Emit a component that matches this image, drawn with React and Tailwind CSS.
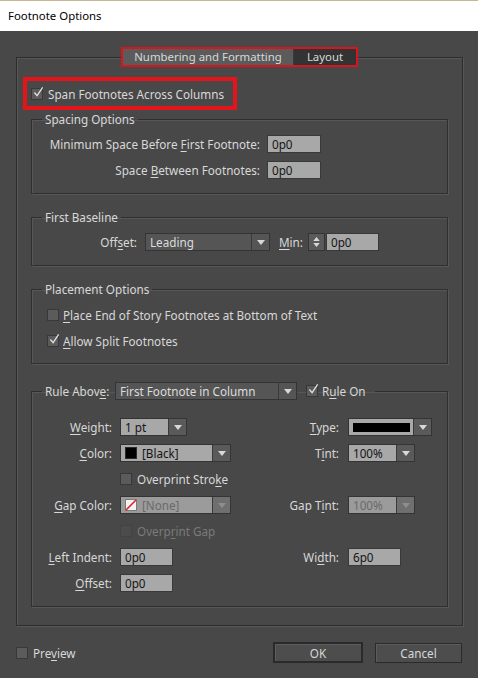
import React from "react";

// mnemonic underline used all over the dialog
const Mn = ({ children }) => (
  <span className="underline decoration-1 underline-offset-[2px]">{children}</span>
);

function Check({ checked = false, disabled = false }) {
  return (
    <span
      className={
        disabled
          ? "relative block h-[12px] w-[12px] shrink-0 border border-[#434343] bg-[#4c4c4c]"
          : "relative block h-[12px] w-[12px] shrink-0 border border-[#383838] bg-[#5b5b5b]"
      }
    >
      {checked && (
        <svg viewBox="0 0 12 12" className="absolute left-[1px] top-[-3px] h-[12px] w-[11px]">
          <path d="M1.5 6.5 L4.5 10 L10.5 1" fill="none" stroke="#e2e2e2" strokeWidth="1.4" />
        </svg>
      )}
    </span>
  );
}

const Arrow = ({ color }) => (
  <svg viewBox="0 0 8 5" className="h-[5px] w-[8px]">
    <path d="M0 0 H8 L4 5 Z" fill={color} />
  </svg>
);

function Select({ width, tone = "light", children }) {
  const box = {
    light: "bg-[#a8a8a8] text-[#151515]",
    dark: "bg-[#555555] text-[#dcdcdc]",
    off: "bg-[#9b9b9b] text-[#6a6a6a]",
  }[tone];
  const btn = {
    light: "bg-[#5a5a5a]",
    dark: "bg-[#555555]",
    off: "bg-[#6f6f6f]",
  }[tone];
  return (
    <div className={`flex h-[18px] border border-[#343434] ${width}`}>
      <div className={`flex min-w-0 flex-1 items-center gap-[5px] pl-[4px] ${box}`}>{children}</div>
      <div className={`flex w-[18px] items-center justify-center border-l border-[#3a3a3a] ${btn}`}>
        <Arrow color={tone === "off" ? "#8e8e8e" : "#d8d8d8"} />
      </div>
    </div>
  );
}

const Field = ({ value, width = "w-[54px]" }) => (
  <div className={`flex h-[18px] items-center border border-[#393939] bg-[#a8a8a8] pl-[4px] text-[#151515] ${width}`}>
    {value}
  </div>
);

function Spinner() {
  return (
    <div className="flex h-[18px] w-[17px] flex-col items-center justify-center gap-[2px] border border-[#343434] bg-[#5a5a5a]">
      <svg viewBox="0 0 8 5" className="h-[4px] w-[7px]">
        <path d="M0 5 H8 L4 0 Z" fill="#d8d8d8" />
      </svg>
      <svg viewBox="0 0 8 5" className="h-[4px] w-[7px]">
        <path d="M0 0 H8 L4 5 Z" fill="#d8d8d8" />
      </svg>
    </div>
  );
}

function Group({ title, className, children }) {
  return (
    <fieldset className={`border border-[#2f2f2f] shadow-[inset_1px_1px_0_#575757,1px_1px_0_#575757] ${className}`}>
      <legend className="ml-[10px] px-[3px] leading-[14px]">{title}</legend>
      {children}
    </fieldset>
  );
}

function RuleRow({ label, control, rlabel, rcontrol }) {
  return (
    <div className="flex h-[26px] items-center">
      <div className="w-[80px] text-right">{label}</div>
      <div className="ml-[8px] w-[148px]">{control}</div>
      <div className="w-[71px] text-right">{rlabel}</div>
      <div className="ml-[9px]">{rcontrol}</div>
    </div>
  );
}

export default function App() {
  return (
    <div className="h-[678px] w-[478px] overflow-hidden font-['Noto_Sans',sans-serif] text-[11.7px] leading-[14px]">
      <div className="flex h-[31px] items-center border-t border-[#c9b693] bg-white pl-[8px] text-[11.4px] text-black">
        Footnote Options
      </div>

      <div className="h-[647px] bg-[#484848] pt-[16px] text-[#d8d8d8]">
        <fieldset className="ml-[16px] h-[579px] w-[447px] border border-[#2d2d2d] px-[14px] shadow-[inset_1px_1px_0_#575757,1px_1px_0_#575757]">
          <legend className="mx-auto">
            <div className="flex h-[20px] border-2 border-[#d9141c]">
              <div className="flex w-[171px] items-center justify-center border-r border-[#3a3a3a] bg-[#5b5b5b] text-[11.4px]">
                Numbering and Formatting
              </div>
              <div className="flex w-[62px] items-center justify-center bg-[#333333] text-[11.4px]">Layout</div>
            </div>
          </legend>

          <div className="pt-[10px]">
            <div className="ml-[-8px] flex h-[33px] w-[214px] items-center gap-[5px] border-4 border-[#e5141b] pl-[4px]">
              <Check checked />
              <span>Span Footnotes Across Columns</span>
            </div>
          </div>

          <Group title="Spacing Options" className="mt-[2px] pb-[14px] pt-[9px]">
            <div className="flex flex-col gap-[8px]">
              <div className="flex h-[18px] items-center">
                <span className="mr-[7px] w-[228px] text-right">
                  Minimum Space Before <Mn>F</Mn>irst Footnote:
                </span>
                <Field value="0p0" />
              </div>
              <div className="flex h-[18px] items-center">
                <span className="mr-[7px] w-[228px] text-right">
                  Space <Mn>B</Mn>etween Footnotes:
                </span>
                <Field value="0p0" />
              </div>
            </div>
          </Group>

          <Group title="First Baseline" className="mt-[16px] pb-[14px] pt-[9px]">
            <div className="flex h-[18px] items-center">
              <span className="mr-[8px] w-[105px] text-right">
                Off<Mn>s</Mn>et:
              </span>
              <Select width="w-[125px]" tone="dark">
                Leading
              </Select>
              <span className="ml-[9px] mr-[5px]">
                <Mn>M</Mn>in:
              </span>
              <Spinner />
              <div className="ml-[1px]">
                <Field value="0p0" width="w-[53px]" />
              </div>
            </div>
          </Group>

          <Group title="Placement Options" className="mt-[16px] pb-[13px] pt-[10px]">
            <div className="flex flex-col gap-[8px] pl-[15px]">
              <div className="flex h-[18px] items-center gap-[4px]">
                <Check />
                <span>
                  <Mn>P</Mn>lace End of Story Footnotes at Bottom of Text
                </span>
              </div>
              <div className="flex h-[18px] items-center gap-[4px]">
                <Check checked />
                <span>
                  <Mn>A</Mn>llow Split Footnotes
                </span>
              </div>
            </div>
          </Group>

          <fieldset className="mt-[18px] border border-[#2f2f2f] pb-[10px] pt-[14px] shadow-[inset_1px_1px_0_#575757,1px_1px_0_#575757]">
            <legend className="ml-[10px] pl-[3px] pr-[9px]">
              <div className="flex h-[18px] items-center">
                <span className="w-[70px]">
                  Rule Abov<Mn>e</Mn>:
                </span>
                <Select width="w-[182px]" tone="dark">
                  First Footnote in Column
                </Select>
                <span className="ml-[9px] mr-[4px]">
                  <Check checked />
                </span>
                <span>
                  R<Mn>u</Mn>le On
                </span>
              </div>
            </legend>

            <RuleRow
              label={<><Mn>W</Mn>eight:</>}
              control={<Select width="w-[67px]">1 pt</Select>}
              rlabel={<><Mn>T</Mn>ype:</>}
              rcontrol={
                <Select width="w-[84px]">
                  <div className="h-[9px] w-[57px] bg-black" />
                </Select>
              }
            />
            <RuleRow
              label={<><Mn>C</Mn>olor:</>}
              control={
                <Select width="w-[111px]">
                  <span className="h-[12px] w-[12px] shrink-0 border border-[#2a2a2a] bg-black" />
                  <span>[Black]</span>
                </Select>
              }
              rlabel={<>T<Mn>i</Mn>nt:</>}
              rcontrol={<Select width="w-[67px]">100%</Select>}
            />
            <RuleRow
              label=""
              control={
                <div className="flex items-center gap-[5px]">
                  <Check />
                  <span>
                    Overprint Stro<Mn>k</Mn>e
                  </span>
                </div>
              }
            />
            <RuleRow
              label={<><Mn>G</Mn>ap Color:</>}
              control={
                <Select width="w-[111px]" tone="off">
                  <svg viewBox="0 0 12 12" className="h-[12px] w-[12px] shrink-0">
                    <rect x="0.5" y="0.5" width="11" height="11" fill="#f2f2f2" stroke="#7a7a7a" />
                    <path d="M1 11 L11 1" stroke="#e0202a" strokeWidth="1.6" />
                  </svg>
                  <span>[None]</span>
                </Select>
              }
              rlabel={<>Gap T<Mn>i</Mn>nt:</>}
              rcontrol={<Select width="w-[67px]" tone="off">100%</Select>}
            />
            <RuleRow
              label=""
              control={
                <div className="flex items-center gap-[5px] text-[#7a7a7a]">
                  <Check disabled />
                  <span>
                    Overp<Mn>r</Mn>int Gap
                  </span>
                </div>
              }
            />
            <RuleRow
              label={<><Mn>L</Mn>eft Indent:</>}
              control={<Field value="0p0" width="w-[53px]" />}
              rlabel={<>Wi<Mn>d</Mn>th:</>}
              rcontrol={<Field value="6p0" width="w-[53px]" />}
            />
            <RuleRow
              label={<><Mn>O</Mn>ffset:</>}
              control={<Field value="0p0" width="w-[53px]" />}
            />
          </fieldset>
        </fieldset>

        <div className="mt-[16px] flex h-[21px] items-center px-[16px]">
          <Check />
          <span className="ml-[5px]">
            Pre<Mn>v</Mn>iew
          </span>
          <div className="ml-auto flex items-center gap-[12px]">
            <button className="h-[21px] w-[90px] border-2 border-[#2a2a2a] bg-[#4d4d4d] shadow-[inset_1px_1px_0_#5c5c5c]">
              OK
            </button>
            <button className="h-[20px] w-[87px] border border-[#2a2a2a] bg-[#4d4d4d] shadow-[inset_1px_1px_0_#5c5c5c]">
              Cancel
            </button>
          </div>
        </div>
      </div>
    </div>
  );
}
